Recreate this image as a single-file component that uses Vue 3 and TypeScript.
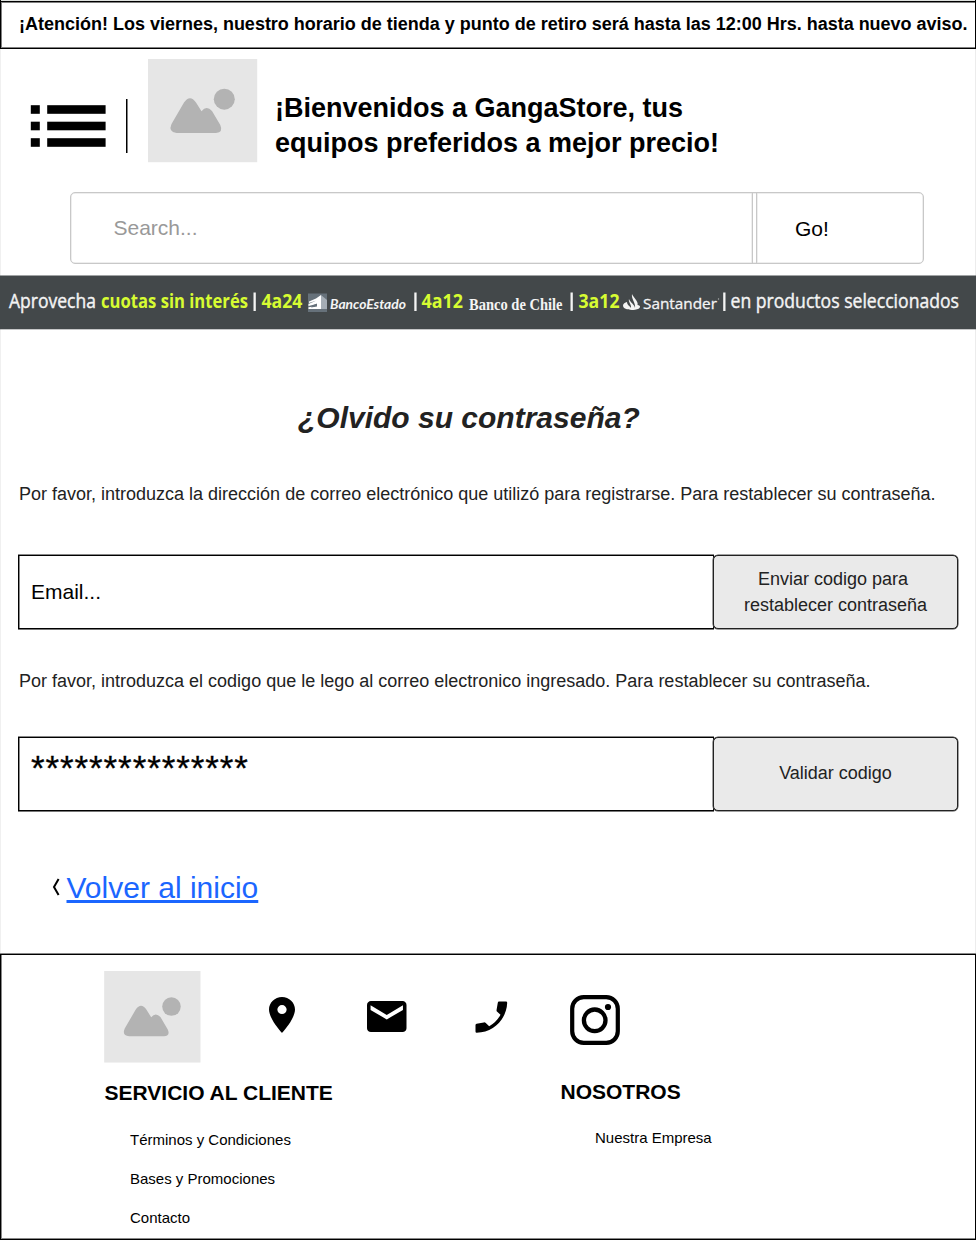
<script setup lang="ts">
const serviceLinks: string[] = ['Términos y Condiciones', 'Bases y Promociones', 'Contacto']
const code = '*'.repeat(15)
</script>

<template>
  <div class="page">
    <div class="notice"><span>¡Atención! Los viernes, nuestro horario de tienda y punto de retiro será hasta las 12:00 Hrs. hasta nuevo aviso.</span></div>

    <header class="header">
      <div class="brand">
        <svg class="menu" width="76" height="44" viewBox="0 0 76 44">
          <g>
            <rect x="0.8" y="1.2" width="9" height="8.6" /><rect x="17.2" y="1.2" width="58.4" height="8.6" />
            <rect x="0.8" y="17.7" width="9" height="8.6" /><rect x="17.2" y="17.7" width="58.4" height="8.6" />
            <rect x="0.8" y="34.2" width="9" height="8.6" /><rect x="17.2" y="34.2" width="58.4" height="8.6" />
          </g>
        </svg>
        <span class="divider"></span>
        <svg class="logo" width="110" height="104" viewBox="0 0 110 104" preserveAspectRatio="none">
          <rect x="0" y="0" width="109.2" height="103.2" fill="#e6e6e6" />
          <circle cx="76.3" cy="40.2" r="10.5" fill="#b3b3b3" />
          <path d="M23.500 65 36 43.500Q42 35 48 43.500L53.500 52.300Q58.500 46 64 52L72.300 66Q75.500 73.300 68 73.900H28.500Q20 73 23.500 65Z" fill="#b3b3b3" />
        </svg>
        <h1>¡Bienvenidos a GangaStore, tus<br>equipos preferidos a mejor precio!</h1>
      </div>
      <div class="search">
        <div class="search-field">Search...</div>
        <div class="search-go">Go!</div>
      </div>
    </header>

    <svg class="banner" width="976" height="55" viewBox="0 275 976 55">
      <rect x="0" y="275.500" width="976" height="53.800" fill="#43484a" />
      <g class="promo" fill="#f4f4f4">
        <g transform="translate(0 308.400) scale(1 1.030)">
          <text class="plain" x="9" y="0" textLength="87" lengthAdjust="spacingAndGlyphs">Aprovecha</text>
          <text class="lime" x="101" y="0" textLength="147" lengthAdjust="spacingAndGlyphs">cuotas sin interés</text>
          <text class="lime" x="261.500" y="0" textLength="41" lengthAdjust="spacingAndGlyphs">4a24</text>
          <text class="lime" x="421.500" y="0" textLength="41.500" lengthAdjust="spacingAndGlyphs">4a12</text>
          <text class="lime" x="578.500" y="0" textLength="41" lengthAdjust="spacingAndGlyphs">3a12</text>
          <text class="plain" x="730.500" y="0" textLength="228.500" lengthAdjust="spacingAndGlyphs">en productos seleccionados</text>
        </g>
        <rect x="253.500" y="292.500" width="2.300" height="18.500" />
        <rect x="414.300" y="292.500" width="2.300" height="18.500" />
        <rect x="570.500" y="292.500" width="2.300" height="18.500" />
        <rect x="723.200" y="292.500" width="2.300" height="18.500" />
        <text class="estado" x="330" y="309" textLength="76" lengthAdjust="spacingAndGlyphs">BancoEstado</text>
        <text class="chile" x="469" y="310" textLength="93.500" lengthAdjust="spacingAndGlyphs">Banco de Chile</text>
        <text class="santander" x="643" y="309" textLength="74" lengthAdjust="spacingAndGlyphs">Santander</text>
        <circle cx="718.500" cy="299" r="0.700" opacity=".6" />
      </g>
      <rect x="308" y="293.500" width="19" height="18.500" fill="#66717a" />
      <path d="M321 295 327 300V309H321Z" fill="#a5adb5" />
      <path d="M316 298.500 321 295V309H308.500V307.300L315 306.500 316.500 304 308.500 306V304L316.500 300.500 309 303V301.500Z" fill="#fff" />
      <path d="M313 305.200 317 303.600V306.600L311 307.400Z" fill="#66717a" />
      <path d="M632 294C633 297 639 302 637.500 305C641 305 641.500 309 635 309.700C629 310.500 623 309 623 305.500C623 303.500 625 302.500 627 302C627 305 630 306 631 308C631.500 304 628 302 629 299C630 302 635 305 635 308C636 303 631 299 632 294Z" fill="#f4f4f4" />
    </svg>

    <main class="main">
      <h2>¿Olvido su contraseña?</h2>
      <p class="hint hint-email">Por favor, introduzca la dirección de correo electrónico que utilizó para registrarse. Para restablecer su contraseña.</p>
      <div class="row">
        <div class="field email">Email...</div>
        <div class="button">Enviar codigo para&nbsp;<br>restablecer contraseña</div>
      </div>
      <p class="hint hint-code">Por favor, introduzca el codigo que le lego al correo electronico ingresado. Para restablecer su contraseña.</p>
      <div class="row">
        <div class="field code">{{ code }}</div>
        <div class="button single">Validar codigo</div>
      </div>
      <div class="back">
        <svg width="8" height="18" viewBox="0 0 8 18"><path d="M6.600 1 2 9 6.600 17" fill="none" stroke="#000" stroke-width="2" /></svg>
        <a>Volver al inicio</a>
      </div>
    </main>

    <footer class="footer">
      <div class="icons">
        <svg class="logo-small" width="97" height="92" viewBox="0 0 110 104" preserveAspectRatio="none">
          <rect x="0.200" y="0" width="109.200" height="103.500" fill="#e6e6e6" />
          <circle cx="76.500" cy="40.200" r="10.500" fill="#b3b3b3" />
          <path d="M23.500 65 36 43.500Q42 35 48 43.500L53.500 52.300Q58.500 46 64 52L72.300 66Q75.500 73.300 68 73.900H28.500Q20 73 23.500 65Z" fill="#b3b3b3" />
        </svg>
        <svg class="pin" width="26" height="36" viewBox="5 2 14 20" preserveAspectRatio="none"><path d="M12 2C8.130 2 5 5.130 5 9c0 5.250 7 13 7 13s7-7.750 7-13c0-3.870-3.130-7-7-7zm0 9.500a2.500 2.500 0 0 1 0-5 2.500 2.500 0 0 1 0 5z" /></svg>
        <svg class="mail" width="39.500" height="31" viewBox="2 4 20 16" preserveAspectRatio="none"><path d="M20 4H4c-1.100 0-1.990.9-1.990 2L2 18c0 1.100.9 2 2 2h16c1.100 0 2-.9 2-2V6c0-1.100-.9-2-2-2zm.2 4.600-8.200 4.900-8.200-4.900V6.200l8.200 5 8.200-5z" /></svg>
        <svg class="phone" width="33" height="32" viewBox="0 0 33 32"><path d="M24 .5Q23 .5 22.800 1.700L21.500 9.200Q21.500 10.200 22.200 10.700L25.500 13.700Q21.500 21.200 14.200 25.200L10.500 21.700Q9.800 21.200 8.800 21.400L1.600 22.700Q.5 22.900.5 24V30.500Q.5 31.700 1.700 31.700C18.500 31.500 31.500 18.500 32.200 1.700Q32.200.5 31 .5Z" /></svg>
        <svg class="insta" width="50" height="50" viewBox="0 0 50 50" fill="none" stroke="#000" stroke-width="4.200"><rect x="2.200" y="2.200" width="45.600" height="45.600" rx="11.500" /><circle cx="24.700" cy="25.300" r="10.800" stroke-width="4.300" /><circle cx="38" cy="12" r="3.100" fill="#000" stroke="none" /></svg>
      </div>
      <div class="columns">
        <section class="service">
          <h3>SERVICIO AL CLIENTE</h3>
          <a v-for="l in serviceLinks" :key="l">{{ l }}</a>
        </section>
        <section class="about">
          <h3>NOSOTROS</h3>
          <a>Nuestra Empresa</a>
        </section>
      </div>
    </footer>
  </div>
</template>

<style>
body { margin: 0; background: #fff; }
</style>

<style scoped>
.page { box-sizing: border-box; width: 976px; height: 1240px; overflow: hidden; font-family: "Liberation Sans", Arial, sans-serif; color: #000; white-space: nowrap; box-shadow: inset 1px 0 #f0f0f0, inset -1px 0 #ececec; }
h1, h2, h3, p { margin: 0; }
svg { display: block; flex: none; }
.notice { box-sizing: border-box; height: 49px; border: 1px solid #000; border-top: 0; box-shadow: inset 0 1px #dfe2df, inset 0 2px #000, inset 0 3px #808080, inset 1px -1px #808080; padding-left: 18px; font-weight: bold; font-size: 18px; line-height: 48px; letter-spacing: -.006px; }
.header { height: 226px; }
.brand { display: flex; height: 143px; }
.menu { margin: 55px 0 0 30px; }
.divider { width: 1px; height: 54px; margin: 50px 0 0 20px; background: #000; box-shadow: 1px 0 #808080; }
.logo { margin: 10px 0 0 21px; }
h1 { margin: 42px 0 0 17px; font-size: 27px; line-height: 35px; }
.search { display: flex; box-sizing: border-box; width: 854px; height: 72px; margin-left: 70px; border: 1px solid #c8c8c8; border-radius: 5px; box-shadow: inset 0 0 0 .5px #ddd; font-size: 21px; line-height: 70px; }
.search-field, .search-go { box-sizing: border-box; }
.search-field { width: 682px; padding-left: 42.500px; color: #999; border-right: 1px solid #c8c8c8; margin-right: 3px; box-shadow: inset -.5px 0 #ddd; }
.search-go { flex: 1; padding-left: 38px; padding-top: 1px; border-left: 1px solid #c8c8c8; box-shadow: inset .5px 0 #ddd; }
.promo { font-family: "Open Sans", "Noto Sans", sans-serif; font-size: 18.500px; }
.plain { stroke: #f4f4f4; stroke-width: .4px; }
.lime { fill: #d7fc32; font-weight: 700; }
.estado { font-family: Lato, sans-serif; font-size: 13.500px; font-style: italic; font-weight: 700; }
.chile { font-family: "Liberation Serif", serif; font-size: 17.500px; font-weight: 700; }
.santander { font-size: 15px; stroke: #f4f4f4; stroke-width: .3px; }
.main { height: 624px; color: #222; }
h2 { padding: 68px 0 0 298px; font-size: 30px; line-height: 40px; font-style: italic; }
.hint { padding-left: 19px; font-size: 18px; line-height: 24px; }
.hint-email { margin-top: 44px; }
.row { display: flex; margin-left: 18px; }
.hint-email + .row { margin-top: 49px; }
.field { box-sizing: border-box; width: 696px; height: 74px; margin-right: -1px; border: 1px solid #000; box-shadow: 0 -1px #888, 0 1px #777, inset 1px 0 #888; padding-left: 12px; color: #000; }
.email { font-size: 21px; line-height: 72px; }
.code { font-size: 35px; line-height: 60px; letter-spacing: .900px; -webkit-text-stroke: .3px #000; }
.button { box-sizing: border-box; width: 245px; height: 74px; border: 1px solid #222; border-radius: 5px; background: #eaeaea; box-shadow: 0 0 0 .5px #444; font-size: 18px; line-height: 26px; padding-top: 10px; text-align: center; }
.single { line-height: 70px; padding-top: 0; }
.hint-code { margin-top: 40px; }
.hint-code + .row { margin-top: 44px; }
.back { display: flex; align-items: center; gap: 6px; margin: 56px 0 0 52px; height: 40px; }
.back a { color: #1b66ff; font-size: 30px; line-height: 40px; padding-top: 2px; margin-left: .5px; text-decoration: underline; text-decoration-thickness: 3px; text-underline-offset: 2px; text-decoration-skip-ink: none; }
.footer { box-sizing: border-box; height: 286px; border: 1px solid #000; box-shadow: 0 -1px #888, inset 1px -1px #888; }
.icons { display: flex; padding-left: 103px; height: 124px; }
.logo-small { margin-top: 16px; }
.pin { margin: 42px 0 0 68px; }
.mail { margin: 46px 0 0 72px; }
.phone { margin: 46px 0 0 68.500px; }
.insta { margin: 40px 0 0 62px; }
.columns { display: flex; }
.columns section { display: flex; flex-direction: column; }
.service { width: 456px; padding-left: 104px; box-sizing: border-box; }
.service h3 { margin-left: -.5px; }
.service a { padding-left: 25px; }
h3 { font-size: 21px; line-height: 28px; margin-bottom: 13px; }
.columns a { font-size: 15px; line-height: 39px; }
.about { padding-left: 103.500px; margin-top: -1px; }
.about h3 { margin-bottom: 12px; }
.about a { padding-left: 34.500px; }
</style>
